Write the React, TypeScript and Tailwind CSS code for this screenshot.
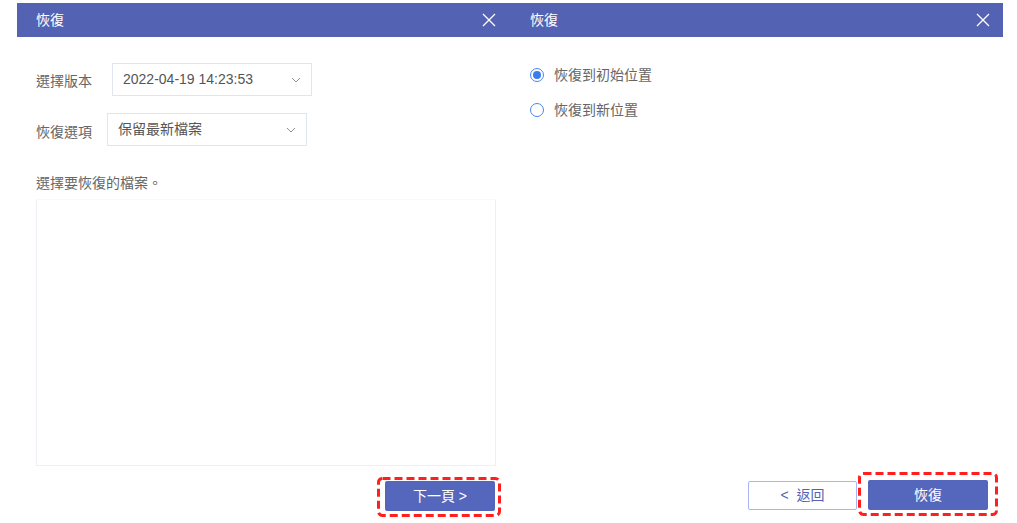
import React from "react";

const font = { fontFamily: '"Liberation Sans", "Noto Sans CJK TC", sans-serif' };

function CloseIcon() {
  return (
    <svg width="14" height="14" viewBox="0 0 14 14" fill="none">
      <path d="M1 1L13 13M13 1L1 13" stroke="white" strokeWidth="1.3" />
    </svg>
  );
}

function Chevron() {
  return (
    <svg width="10" height="6" viewBox="0 0 10 6" fill="none">
      <path d="M1 1L5 5L9 1" stroke="#8a8f99" strokeWidth="1" />
    </svg>
  );
}

function Dashed({ children, className }: { children: React.ReactNode; className: string }) {
  return (
    <div className={`relative ${className}`}>
      <svg className="absolute inset-0 w-full h-full pointer-events-none overflow-visible">
        <rect
          x="1.5"
          y="1.5"
          width="calc(100% - 3px)"
          height="calc(100% - 3px)"
          rx="4"
          fill="none"
          stroke="#ff1f1f"
          strokeWidth="3"
          strokeDasharray="8 4"
        />
      </svg>
      {children}
    </div>
  );
}

function Select({ value, w, ml }: { value: string; w: string; ml: string }) {
  return (
    <div
      className={`${w} ${ml} h-[33px] border border-[#dfe6f1] flex items-center justify-between pl-[10px] pr-[10px] text-[14px] text-[#555]`}
    >
      <span>{value}</span>
      <Chevron />
    </div>
  );
}

function Radio({ checked, label }: { checked: boolean; label: string }) {
  return (
    <div className="flex items-center h-[20px]">
      <div className="w-[14px] h-[14px] rounded-full border border-[#4a86f0] flex items-center justify-center bg-white">
        {checked && <div className="w-[8px] h-[8px] rounded-full bg-[#3d7bf0]" />}
      </div>
      <span className="ml-[10px] text-[14px] text-[#666]">{label}</span>
    </div>
  );
}

export default function App() {
  return (
    <div className="w-[1017px] h-[523px] bg-white pt-[3px] pl-[17px]" style={font}>
      <div className="flex w-[986px] h-[520px]">
        {/* Left panel */}
        <div className="w-[498px] flex flex-col">
          <div className="h-[34px] bg-[#5462b3] flex items-center justify-between pl-[19px] pr-[19px]">
            <span className="text-white text-[14px]">恢復</span>
            <CloseIcon />
          </div>
          <div className="pl-[19px] flex flex-col">
            <div className="flex items-center mt-[26px]">
              <span className="w-[56px] text-[14px] text-[#666] leading-[20px] mt-[2px]">選擇版本</span>
              <Select value="2022-04-19 14:23:53" w="w-[200px]" ml="ml-[20px]" />
            </div>
            <div className="flex items-center mt-[17px]">
              <span className="w-[56px] text-[14px] text-[#666] leading-[20px] mt-[4px]">恢復選項</span>
              <Select value="保留最新檔案" w="w-[200px]" ml="ml-[15px]" />
            </div>
            <div className="mt-[27px] text-[14px] text-[#666] leading-[20px]">選擇要恢復的檔案。</div>
            <div className="mt-[6px] w-[460px] h-[267px] border border-[#edf1f7] border-t-[#f7f9fc]" />
            <div className="flex justify-end w-[465px] mt-[11px]">
              <Dashed className="pl-[8px] pr-[6px] pt-[4px] pb-[6px]">
                <div className="w-[110px] h-[30px] bg-[#5467bc] rounded-[2px] flex items-center justify-center text-white text-[14px]">
                  下一頁 &gt;
                </div>
              </Dashed>
            </div>
          </div>
        </div>
        {/* Right panel */}
        <div className="flex-1 flex flex-col">
          <div className="h-[34px] bg-[#5462b3] flex items-center justify-between pl-[15px] pr-[13px]">
            <span className="text-white text-[14px]">恢復</span>
            <CloseIcon />
          </div>
          <div className="pl-[15px] pt-[28px] flex flex-col gap-[15px]">
            <Radio checked label="恢復到初始位置" />
            <Radio checked={false} label="恢復到新位置" />
          </div>
          <div className="flex-1" />
          <div className="flex items-start pl-[233px] pb-[7px]">
            <div className="mt-[9px] w-[109px] h-[29px] border border-[#a9b4f3] rounded-[2px] flex items-center justify-center text-[14px] text-[#5462b3]">
              <span className="mr-[8px]">&lt;</span>返回
            </div>
            <Dashed className="ml-[1px] pl-[10px] pr-[10px] pt-[8px] pb-[6px]">
              <div className="w-[120px] h-[30px] bg-[#5467bc] rounded-[2px] flex items-center justify-center text-white text-[14px]">
                恢復
              </div>
            </Dashed>
          </div>
        </div>
      </div>
    </div>
  );
}
